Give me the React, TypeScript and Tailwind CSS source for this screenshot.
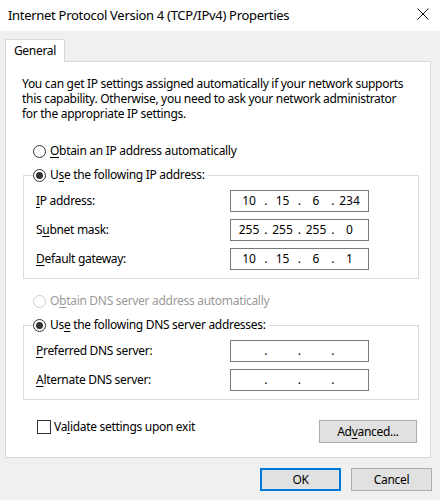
import React from 'react';

const font = { fontFamily: '"Noto Sans", "Open Sans", sans-serif' };

const Radio: React.FC<{ checked?: boolean; disabled?: boolean }> = ({ checked = false, disabled = false }) => (
  <span
    className={`flex h-[13px] w-[13px] shrink-0 items-center justify-center rounded-full border bg-white ${
      disabled ? 'border-[#cccccc]' : 'border-[#333333]'
    }`}
  >
    {checked && <span className="h-[7px] w-[7px] rounded-full bg-[#333333]" />}
  </span>
);

// Text with an underlined access key, like Windows mnemonics
const Mn: React.FC<{ pre?: string; k: string; post: string }> = ({ pre = '', k, post }) => (
  <span>
    {pre}
    <span className="underline underline-offset-2">{k}</span>
    {post}
  </span>
);

const IpField: React.FC<{ octets: string[] }> = ({ octets }) => (
  <div className="flex h-[22px] w-[139px] items-center border border-[#7a7a7a] bg-white pl-[5px] text-[12px] tracking-normal">
    {octets.map((o, i) => (
      <React.Fragment key={i}>
        <span className="w-[26px] text-center">{o}</span>
        {i < 3 && <span className="w-[7.5px] text-center">.</span>}
      </React.Fragment>
    ))}
  </div>
);

const FieldRow: React.FC<{ label: React.ReactNode; octets: string[] }> = ({ label, octets }) => (
  <div className="mt-[7px] flex items-center">
    <span className="ml-[3px] w-[194px]">{label}</span>
    <IpField octets={octets} />
  </div>
);

const Button: React.FC<{ children: React.ReactNode; primary?: boolean; className?: string }> = ({ children, primary, className = '' }) => (
  <button
    className={`flex h-[23px] items-center justify-center bg-[#e1e1e1] text-[12px] text-black ${
      primary ? 'border-2 border-[#0078d7]' : 'border border-[#adadad]'
    } ${className}`}
  >
    {children}
  </button>
);

const intro = [
  'You can get IP settings assigned automatically if your network supports',
  'this capability. Otherwise, you need to ask your network administrator',
  'for the appropriate IP settings.',
];

export default function App() {
  return (
    <div className="h-[500px] w-[440px] overflow-hidden bg-[#f0f0f0] text-[12px] tracking-[-0.3px] text-black" style={font}>
      {/* Title bar */}
      <div className="flex h-[31px] items-center justify-between bg-white pl-[8px] pr-[10px]">
        <span className="text-[13px]">Internet Protocol Version 4 (TCP/IPv4) Properties</span>
        <svg width="12" height="12" viewBox="0 0 12 12" className="mb-[3px] mr-[1px]">
          <path d="M0.5 0.5 L11.5 11.5 M11.5 0.5 L0.5 11.5" stroke="#111" strokeWidth="1" />
        </svg>
      </div>

      <div className="pl-[5px] pr-[9px] pt-[8px]">
        {/* Tab */}
        <div className="relative z-10 -mb-px flex h-[23px] w-[60px] items-center justify-center border border-b-0 border-[#d9d9d9] bg-white">
          General
        </div>

        {/* Panel */}
        <div className="flex h-[397px] flex-col border border-[#d9d9d9] bg-white">
          <div className="ml-[16px] mt-[14px] flex w-[400px] flex-col">
            {intro.map((line) => (
              <span key={line} className="flex h-[15px] items-center whitespace-nowrap leading-[14px]">
                {line}
              </span>
            ))}
          </div>

          <div className="ml-[27px] mt-[22px] flex h-[16px] items-center gap-[4px]">
            <Radio />
            <Mn k="O" post="btain an IP address automatically" />
          </div>

          <fieldset className="ml-[17px] mt-[8px] w-[396px] border border-[#dcdcdc] px-[9px] pb-[8px]">
            <legend className="flex h-[16px] items-center gap-[4px] pr-[3px]">
              <Radio checked />
              <Mn pre="U" k="s" post="e the following IP address:" />
            </legend>
            <FieldRow label={<Mn k="I" post="P address:" />} octets={['10', '15', '6', '234']} />
            <FieldRow label={<Mn pre="S" k="u" post="bnet mask:" />} octets={['255', '255', '255', '0']} />
            <FieldRow label={<Mn k="D" post="efault gateway:" />} octets={['10', '15', '6', '1']} />
          </fieldset>

          <div className="ml-[27px] mt-[14px] flex h-[16px] items-center gap-[4px] text-[#9a9a9a]">
            <Radio disabled />
            <Mn pre="O" k="b" post="tain DNS server address automatically" />
          </div>

          <fieldset className="ml-[17px] mt-[8px] w-[396px] border border-[#dcdcdc] px-[9px] pb-[8px]">
            <legend className="flex h-[16px] items-center gap-[4px] pr-[3px]">
              <Radio checked />
              <Mn pre="Us" k="e" post=" the following DNS server addresses:" />
            </legend>
            <FieldRow label={<Mn k="P" post="referred DNS server:" />} octets={['', '', '', '']} />
            <FieldRow label={<Mn k="A" post="lternate DNS server:" />} octets={['', '', '', '']} />
          </fieldset>

          <div className="mr-[13px] mt-[20px] flex items-start justify-between">
            <div className="ml-[31px] flex h-[14px] items-center gap-[3px]">
              <span className="h-[14px] w-[14px] border border-[#333333] bg-white" />
              <Mn pre="Va" k="l" post="idate settings upon exit" />
            </div>
            <Button className="w-[98px]">
              <Mn pre="Ad" k="v" post="anced..." />
            </Button>
          </div>
        </div>

        {/* Dialog buttons */}
        <div className="-mr-[1px] mt-[10px] flex justify-end gap-[10px]">
          <Button primary className="w-[81px]">OK</Button>
          <Button className="w-[81px]">Cancel</Button>
        </div>
      </div>
    </div>
  );
}
